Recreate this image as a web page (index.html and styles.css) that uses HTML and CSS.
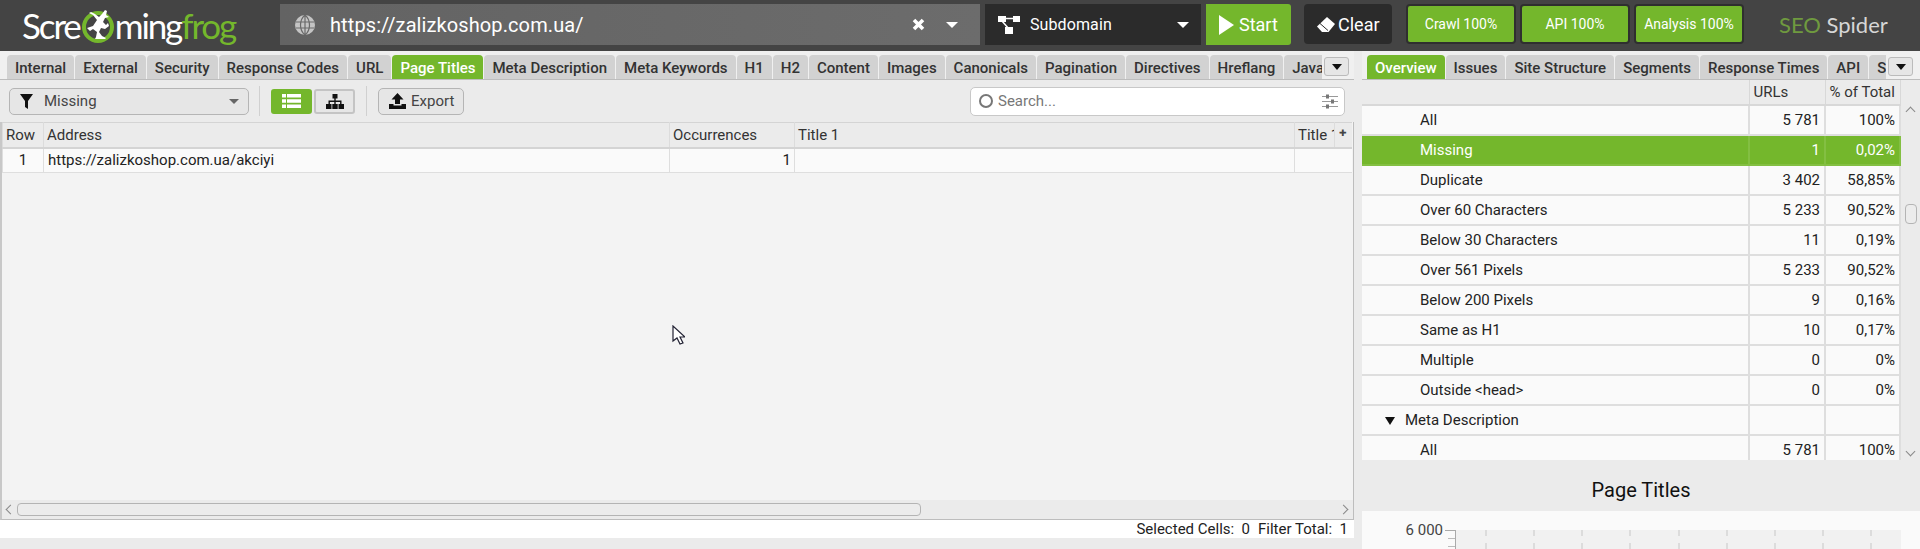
FILE: index.html
```html
<!DOCTYPE html>
<html lang="en">
<head>
  <meta charset="UTF-8">
  <title>Screaming Frog SEO Spider</title>
  <link rel="stylesheet" href="styles.css">
</head>
<body>
  <header class="topbar">
    <div class="logo">
      <span>Scre</span>
      <svg class="logo-frog" viewBox="0 0 34 38" width="34" height="38">
        <circle cx="17" cy="21" r="14" fill="none" stroke="#74b72c" stroke-width="4"/>
        <path fill="#fff" d="M10 6l4 2 4 3 3-3 3-4 2 1-1 4 3 2-4 1-2 4 3 3 2-2 1 3-4 3-4-1-2 4 3 4 4 2-1 1H14l1-2 1-5-4-3-3 2-3-3 3-1 3-1 2-3 2-3-4-5-4-2z"/>
      </svg>
      <span>ming</span><span class="logo-green">frog</span>
    </div>
    <div class="url-box">
      <svg class="globe" viewBox="0 0 20 20" width="20" height="20">
        <circle cx="10" cy="10" r="10" fill="#c4c4c4"/>
        <path d="M1 7h18M1 13h18M10 0v20M10 0c-6 5-6 15 0 20M10 0c6 5 6 15 0 20" fill="none" stroke="#6a6a6a" stroke-width="1.2"/>
      </svg>
      <span class="url-text">https://zalizkoshop.com.ua/</span>
      <svg class="url-x" viewBox="0 0 13 13" width="13" height="13">
        <path d="M2 2l9 9M11 2l-9 9" stroke="#fff" stroke-width="3.600" fill="none"/>
      </svg>
      <span class="caret-white"></span>
    </div>
    <div class="mode-box">
      <svg viewBox="0 0 22 18" width="22" height="18">
        <path d="M6 2.500h10M4 5l7 8" stroke="#fff" stroke-width="1.5" fill="none"/>
        <rect x="0" y="0" width="8" height="6" fill="#fff"/>
        <rect x="15" y="0" width="7" height="6" fill="#fff"/>
        <rect x="7" y="11" width="8" height="7" fill="#fff"/>
      </svg>
      <span class="mode-text">Subdomain</span>
      <span class="caret-white"></span>
    </div>
    <button class="start-btn">
      <svg viewBox="0 0 15 20" width="15" height="20"><path d="M0 0l15 10L0 20z" fill="#fff"/></svg>
      Start
    </button>
    <button class="clear-btn">
      <svg viewBox="0 0 18 15" width="18" height="15">
        <path d="M10 0l8 7-6.500 8H5L0 9.500z" fill="#fff"/>
        <path d="M3 6.500l8 7" stroke="#2b2b2b" stroke-width="1" fill="none"/>
      </svg>
      Clear
    </button>
    <div class="progress">Crawl 100%</div>
    <div class="progress">API 100%</div>
    <div class="progress">Analysis 100%</div>
    <div class="brand"><span class="brand-seo">SEO</span> Spider</div>
  </header>

  <main class="workspace">
    <section class="left-pane">
      <nav class="tabs">
        <div class="tab-strip">
          <a class="tab">Internal</a>
          <a class="tab">External</a>
          <a class="tab">Security</a>
          <a class="tab">Response Codes</a>
          <a class="tab">URL</a>
          <a class="tab active">Page Titles</a>
          <a class="tab">Meta Description</a>
          <a class="tab">Meta Keywords</a>
          <a class="tab">H1</a>
          <a class="tab">H2</a>
          <a class="tab">Content</a>
          <a class="tab">Images</a>
          <a class="tab">Canonicals</a>
          <a class="tab">Pagination</a>
          <a class="tab">Directives</a>
          <a class="tab">Hreflang</a>
          <a class="tab">Java</a>
        </div>
        <button class="tab-more"><span class="caret-black"></span></button>
      </nav>
      <div class="toolbar">
        <div class="filter-select">
          <svg viewBox="0 0 13 15" width="13" height="15"><path d="M0 0h13L8 7v8L5 13V7z" fill="#111"/></svg>
          <span class="filter-text">Missing</span>
          <span class="caret-grey"></span>
        </div>
        <div class="tool-sep"></div>
        <button class="view-btn on">
          <svg viewBox="0 0 19 14" width="19" height="14">
            <path d="M0 0h4v3.400H0zM5 0h14v3.400H5zM0 5.300h4v3.400H0zM5 5.300h14v3.400H5zM0 10.600h4V14H0zM5 10.600h14V14H5z" fill="#fff"/>
          </svg>
        </button>
        <button class="view-btn">
          <svg viewBox="0 0 18 15" width="18" height="15">
            <path d="M6.500 0h5v4.500h-5zM8.300 4.500h1.400v2.500H8.300zM2.500 6.500h13v1.400h-13zM2.500 6.500h1.400V10H2.500zM14.100 6.500h1.400V10h-1.400zM8.300 6.500h1.400V10H8.300zM0 10h5.500v5H0zM6.300 10h5.400v5H6.300zM12.500 10H18v5h-5.500z" fill="#111"/>
          </svg>
        </button>
        <div class="tool-sep last"></div>
        <button class="export-btn">
          <svg viewBox="0 0 17 16" width="17" height="16">
            <path d="M8.500 0l6 6.500h-3.500v4.500H6V6.500H2.500zM0 11h4.500v1.500h8V11H17v5H0z" fill="#111"/>
          </svg>
          Export
        </button>
        <div class="search-box">
          <span class="search-ring"></span>
          <span class="search-text">Search...</span>
          <svg viewBox="0 0 16 15" width="16" height="15">
            <path d="M0 2.500h16M0 7.500h16M0 12.500h16" stroke="#999" stroke-width="1"/>
            <path d="M4 0.500h3v4H4zM9 5.500h3v4H9zM4 10.500h3v4H4z" fill="#777"/>
          </svg>
        </div>
      </div>
      <div class="grid-wrap">
        <table class="url-grid">
          <colgroup>
            <col class="c-row"><col class="c-addr"><col class="c-occ"><col class="c-title"><col class="c-title2"><col class="c-plus">
          </colgroup>
          <thead>
            <tr><th>Row</th><th>Address</th><th>Occurrences</th><th>Title 1</th><th>Title 1</th><th class="plus">✚</th></tr>
          </thead>
          <tbody>
            <tr><td class="center">1</td><td class="addr">https://zalizkoshop.com.ua/akciyi</td><td class="num">1</td><td></td><td class="blank" colspan="2"></td></tr>
          </tbody>
        </table>
        <svg class="cursor" viewBox="0 0 13 20" width="13" height="20">
          <path d="M1 1v15l4-3 3 6 3-1-3-6h5z" fill="#fff" stroke="#223" stroke-width="1.200"/>
        </svg>
      </div>
      <div class="hscroll">
        <span class="chev left"></span>
        <div class="hthumb"></div>
        <span class="chev right"></span>
      </div>
      <div class="statusbar">
        <span>Selected Cells:&nbsp; 0</span><span>Filter Total:&nbsp; 1</span>
      </div>
    </section>

    <section class="right-pane">
      <nav class="tabs right-tabs">
        <div class="tab-strip">
          <a class="tab active">Overview</a>
          <a class="tab">Issues</a>
          <a class="tab">Site Structure</a>
          <a class="tab">Segments</a>
          <a class="tab">Response Times</a>
          <a class="tab">API</a>
          <a class="tab">S</a>
        </div>
        <button class="tab-more"><span class="caret-black"></span></button>
      </nav>
      <div class="summary">
        <div class="summary-main">
          <table class="summary-grid">
            <colgroup><col class="s-name"><col class="s-urls"><col class="s-pct"></colgroup>
            <thead><tr><th></th><th>URLs</th><th>% of Total</th></tr></thead>
            <tbody>
              <tr><td class="leaf">All</td><td>5 781</td><td>100%</td></tr>
              <tr class="selected"><td class="leaf">Missing</td><td>1</td><td>0,02%</td></tr>
              <tr><td class="leaf">Duplicate</td><td>3 402</td><td>58,85%</td></tr>
              <tr><td class="leaf">Over 60 Characters</td><td>5 233</td><td>90,52%</td></tr>
              <tr><td class="leaf">Below 30 Characters</td><td>11</td><td>0,19%</td></tr>
              <tr><td class="leaf">Over 561 Pixels</td><td>5 233</td><td>90,52%</td></tr>
              <tr><td class="leaf">Below 200 Pixels</td><td>9</td><td>0,16%</td></tr>
              <tr><td class="leaf">Same as H1</td><td>10</td><td>0,17%</td></tr>
              <tr><td class="leaf">Multiple</td><td>0</td><td>0%</td></tr>
              <tr><td class="leaf">Outside &lt;head&gt;</td><td>0</td><td>0%</td></tr>
              <tr><td class="group"><span class="tree-caret"></span>Meta Description</td><td></td><td></td></tr>
              <tr><td class="leaf">All</td><td>5 781</td><td>100%</td></tr>
            </tbody>
          </table>
        </div>
        <div class="vscroll">
          <span class="chev up"></span>
          <div class="vthumb"></div>
          <span class="chev down"></span>
        </div>
      </div>
      <h2 class="chart-title">Page Titles</h2>
      <div class="chart">
        <span class="y-label">6 000</span>
        <div class="y-axis"></div>
        <div class="plot">
          <i></i><i></i><i></i><i></i><i></i><i></i><i></i><i></i><i></i>
        </div>
      </div>
    </section>
  </main>
</body>
</html>
```

FILE: styles.css
```css
* {
  box-sizing: border-box;
}
html, body {
  margin: 0;
  height: 549px;
  overflow: hidden;
}
body {
  font-family: Roboto, "Liberation Sans", sans-serif;
  font-size: 15px;
  color: #222;
  background: #ebebeb;
  display: flex;
  flex-direction: column;
}
button {
  font-family: inherit;
}

/* top bar */
.topbar {
  height: 51px;
  flex: none;
  background: #444;
  display: flex;
  align-items: flex-start;
  padding-top: 4px;
}
.logo {
  width: 280px;
  flex: none;
  padding-left: 22px;
  height: 41px;
  display: flex;
  align-items: center;
  font-family: Lato, sans-serif;
  font-weight: 400;
  font-size: 35px;
  letter-spacing: -2.1px;
  color: #fff;
}
.logo-frog {
  flex: none;
  margin-left: 1px;
}
.logo-green {
  color: #74b72c;
}
.url-box {
  width: 700px;
  flex: none;
  height: 41px;
  background: linear-gradient(90deg, #636363, #6c6c6c);
  display: flex;
  align-items: center;
  padding: 0 22px 0 15px;
  color: #fff;
}
.globe {
  flex: none;
}
.url-text {
  font-size: 20px;
  letter-spacing: 0.1px;
  margin-left: 15px;
  flex: 1;
}
.url-x {
  flex: none;
  margin-right: 21px;
}
.mode-box {
  width: 216px;
  flex: none;
  height: 41px;
  margin-left: 5px;
  background: #2b2b2b;
  display: flex;
  align-items: center;
  padding: 0 12px 0 13px;
  color: #fff;
  font-size: 16px;
  letter-spacing: 0.1px;
}
.mode-text {
  flex: 1;
  margin-left: 10px;
}
.caret-white {
  width: 0;
  height: 0;
  border-left: 6px solid transparent;
  border-right: 6px solid transparent;
  border-top: 6px solid #fff;
}
.start-btn {
  width: 85px;
  flex: none;
  height: 41px;
  margin-left: 5px;
  border: 0;
  border-radius: 0 3px 3px 0;
  background: #74b72c;
  color: #fff;
  font-size: 18px;
  display: flex;
  align-items: center;
  gap: 5px;
  padding: 0 0 0 13px;
}
.clear-btn {
  width: 88px;
  flex: none;
  height: 40px;
  margin-left: 13px;
  border: 0;
  border-radius: 4px;
  background: #2b2b2b;
  color: #fff;
  font-size: 18px;
  display: flex;
  align-items: center;
  gap: 3px;
  padding: 0 0 0 13px;
}
.progress {
  width: 110px;
  flex: none;
  height: 40px;
  margin-left: 4px;
  background: #74b72c;
  border: 2px solid #2f2f2f;
  border-radius: 4px;
  color: #fff;
  font-size: 14px;
  display: flex;
  align-items: center;
  justify-content: center;
}
.clear-btn + .progress {
  margin-left: 14px;
}
.brand {
  margin-left: 35px;
  font-family: Lato, sans-serif;
  font-size: 22px;
  line-height: 42px;
  color: #d6d6d6;
  white-space: nowrap;
}
.brand-seo {
  color: #6f9a3f;
}

/* panes */
.workspace {
  flex: 1;
  min-height: 0;
  display: flex;
  background: #ebebeb;
}
.left-pane {
  width: 1354px;
  flex: none;
  display: flex;
  flex-direction: column;
}
.right-pane {
  flex: 1;
  min-width: 0;
  margin-left: 8px;
  display: flex;
  flex-direction: column;
}
.tabs {
  height: 29px;
  flex: none;
  display: flex;
  padding: 4px 5px 0 7px;
  border-bottom: 1px solid #bdbdbd;
  background: #f0f0f0;
}
.right-tabs {
  padding: 4px 7px 0 5px;
}
.tab-strip {
  flex: 1;
  min-width: 0;
  display: flex;
  gap: 1px;
  overflow: hidden;
}
.tab {
  flex: none;
  height: 24px;
  padding: 0 8px;
  background: #d2d2d2;
  border-radius: 4px 4px 0 0;
  font-size: 15px;
  font-weight: 500;
  line-height: 26px;
  color: #333;
}
.tab.active {
  background: #74b72c;
  color: #fff;
}
.tab-more {
  flex: none;
  width: 25px;
  height: 19px;
  margin: 2px 0 0 2px;
  background: #e6e6e6;
  border: 1px solid #bbb;
  border-radius: 3px;
  padding: 0;
  display: flex;
  align-items: center;
  justify-content: center;
}
.caret-black {
  width: 0;
  height: 0;
  border-left: 5px solid transparent;
  border-right: 5px solid transparent;
  border-top: 6px solid #111;
}

/* toolbar */
.toolbar {
  height: 42px;
  flex: none;
  display: flex;
  align-items: center;
  padding: 0 9px;
  background: #ebebeb;
}
.filter-select {
  width: 240px;
  flex: none;
  height: 27px;
  border: 1px solid #b5b5b5;
  border-radius: 5px;
  background: #e6e6e6;
  display: flex;
  align-items: center;
  padding: 0 9px 0 10px;
  color: #444;
}
.filter-text {
  flex: 1;
  margin-left: 11px;
}
.caret-grey {
  width: 0;
  height: 0;
  border-left: 5px solid transparent;
  border-right: 5px solid transparent;
  border-top: 5px solid #666;
}
.tool-sep {
  width: 1px;
  height: 30px;
  background: #d0d0d0;
  margin: 0 11px 0 10px;
}
.tool-sep.last {
  margin-left: 11px;
}
.view-btn {
  width: 41px;
  height: 25px;
  border: 2px solid #c4c4c4;
  border-radius: 3px;
  background: #e6e6e6;
  padding: 0;
  display: flex;
  align-items: center;
  justify-content: center;
  margin-left: 2px;
}
.view-btn.on {
  background: #74b72c;
  border-color: #74b72c;
  margin-left: 0;
}
.export-btn {
  width: 86px;
  height: 27px;
  border: 1px solid #b5b5b5;
  border-radius: 5px;
  background: #e6e6e6;
  color: #444;
  font-size: 15px;
  display: flex;
  align-items: center;
  gap: 5px;
  padding: 0 0 0 10px;
}
.search-box {
  width: 375px;
  height: 29px;
  margin-left: auto;
  background: #fff;
  border: 1px solid #c8c8c8;
  border-radius: 5px;
  display: flex;
  align-items: center;
  padding: 0 6px 0 8px;
  color: #777;
}
.search-ring {
  width: 14px;
  height: 14px;
  border: 2px solid #777;
  border-radius: 50%;
  margin-right: 5px;
}
.search-text {
  flex: 1;
}

/* url grid */
.grid-wrap {
  flex: 1;
  min-height: 0;
  position: relative;
  background: #f3f3f3;
  border-left: 2px solid #c8c8c8;
  border-right: 1px solid #bdbdbd;
  overflow: hidden;
}
.url-grid {
  border-collapse: collapse;
  table-layout: fixed;
  width: 1349px;
}
.c-row { width: 41px; }
.c-addr { width: 626px; }
.c-occ { width: 125px; }
.c-title { width: 500px; }
.c-title2 { width: 40px; }
.c-plus { width: 17px; }
.url-grid th {
  height: 25px;
  background: #ebebeb;
  border: 1px solid #dcdcdc;
  border-top: 1px solid #d4d4d4;
  border-bottom: 2px solid #d4d4d4;
  text-align: left;
  font-weight: 400;
  padding: 0 3px;
  white-space: nowrap;
  overflow: hidden;
  color: #333;
}
.url-grid th.plus {
  font-size: 9px;
  color: #444;
  text-align: center;
  vertical-align: top;
  padding: 5px 0 0;
  border-right: 0;
}
.url-grid td {
  height: 25px;
  background: #fafafa;
  border: 1px solid #dedede;
  border-top: 0;
  padding: 0 3px;
  color: #222;
}
.url-grid td.addr {
  padding-left: 4px;
}
.url-grid td.blank {
  border-right: 0;
}
.center {
  text-align: center;
}
.num {
  text-align: right;
}
.cursor {
  position: absolute;
  left: 670px;
  top: 203px;
}

/* scrollbars */
.hscroll {
  height: 20px;
  flex: none;
  background: #ebebeb;
  border-left: 2px solid #c8c8c8;
  border-right: 1px solid #bdbdbd;
  border-bottom: 1px solid #bdbdbd;
  display: flex;
  align-items: center;
  padding: 0 6px 0 5px;
}
.hthumb {
  width: 904px;
  height: 13px;
  margin-left: 3px;
  border: 1px solid #b4b4b4;
  border-radius: 4px;
  background: #ececec;
}
.chev {
  width: 7px;
  height: 7px;
  flex: none;
  border-left: 1px solid #888;
  border-top: 1px solid #888;
}
.chev.left { transform: rotate(-45deg); }
.chev.right { transform: rotate(135deg); margin-left: auto; }
.chev.up { transform: rotate(45deg); }
.chev.down { transform: rotate(225deg); }
.statusbar {
  height: 18px;
  flex: none;
  margin-bottom: 11px;
  background: #fff;
  display: flex;
  justify-content: flex-end;
  gap: 8px;
  padding-right: 6px;
  line-height: 18px;
  color: #222;
}

/* summary table */
.summary {
  height: 380px;
  flex: none;
  display: flex;
  background: #ebebeb;
}
.summary-main {
  width: 539px;
  flex: none;
  overflow: hidden;
}
.summary-grid {
  border-collapse: collapse;
  table-layout: fixed;
  width: 100%;
}
.s-urls { width: 76px; }
.s-pct { width: 75px; }
.summary-grid th {
  height: 25px;
  background: #ebebeb;
  border-right: 1px solid #d8d8d8;
  border-bottom: 2px solid #d8d8d8;
  text-align: left;
  font-weight: 400;
  padding: 0 4px;
  color: #333;
  white-space: nowrap;
}
.summary-grid td {
  height: 30px;
  background: #fafafa;
  border-right: 2px solid #dedede;
  border-bottom: 2px solid #dedede;
  text-align: right;
  padding: 0 4px;
  color: #222;
}
.summary-grid td.leaf {
  text-align: left;
  padding-left: 58px;
}
.summary-grid td.group {
  text-align: left;
  padding-left: 23px;
}
.tree-caret {
  display: inline-block;
  width: 0;
  height: 0;
  border-left: 5px solid transparent;
  border-right: 5px solid transparent;
  border-top: 8px solid #111;
  margin-right: 10px;
}
.summary-grid .selected td {
  background: #74b72c;
  border-color: #83bf42;
  color: #fff;
}
.vscroll {
  flex: 1;
  display: flex;
  flex-direction: column;
  align-items: center;
  padding: 28px 0 0;
  position: relative;
}
.vthumb {
  position: absolute;
  top: 124px;
  left: 4px;
  width: 12px;
  height: 20px;
  border: 1px solid #b4b4b4;
  border-radius: 4px;
  background: #ececec;
}
.chev.down {
  margin-top: auto;
  margin-bottom: 5px;
}

/* chart */
.chart-title {
  margin: 0;
  height: 51px;
  flex: none;
  text-align: center;
  font-size: 20px;
  font-weight: 400;
  line-height: 60px;
  color: #111;
}
.chart {
  flex: 1;
  min-height: 0;
  background: #fafafa;
  display: flex;
  padding-top: 19px;
  overflow: hidden;
}
.y-label {
  width: 81px;
  flex: none;
  line-height: 0;
  text-align: right;
  white-space: nowrap;
  color: #444;
}
.y-axis {
  width: 11px;
  flex: none;
  margin-left: 2px;
  border-top: 1px solid #aaa;
  border-right: 1px solid #aaa;
  background: repeating-linear-gradient(180deg, transparent 0 7px, #bbb 7px 8px) right / 7px 100% no-repeat;
}
.plot {
  width: 445px;
  flex: none;
  background: #f1f1f1;
  display: flex;
  justify-content: space-between;
  padding: 0 29px;
}
.plot i {
  width: 0;
  border-left: 2px dashed #dcdcdc;
}
```
